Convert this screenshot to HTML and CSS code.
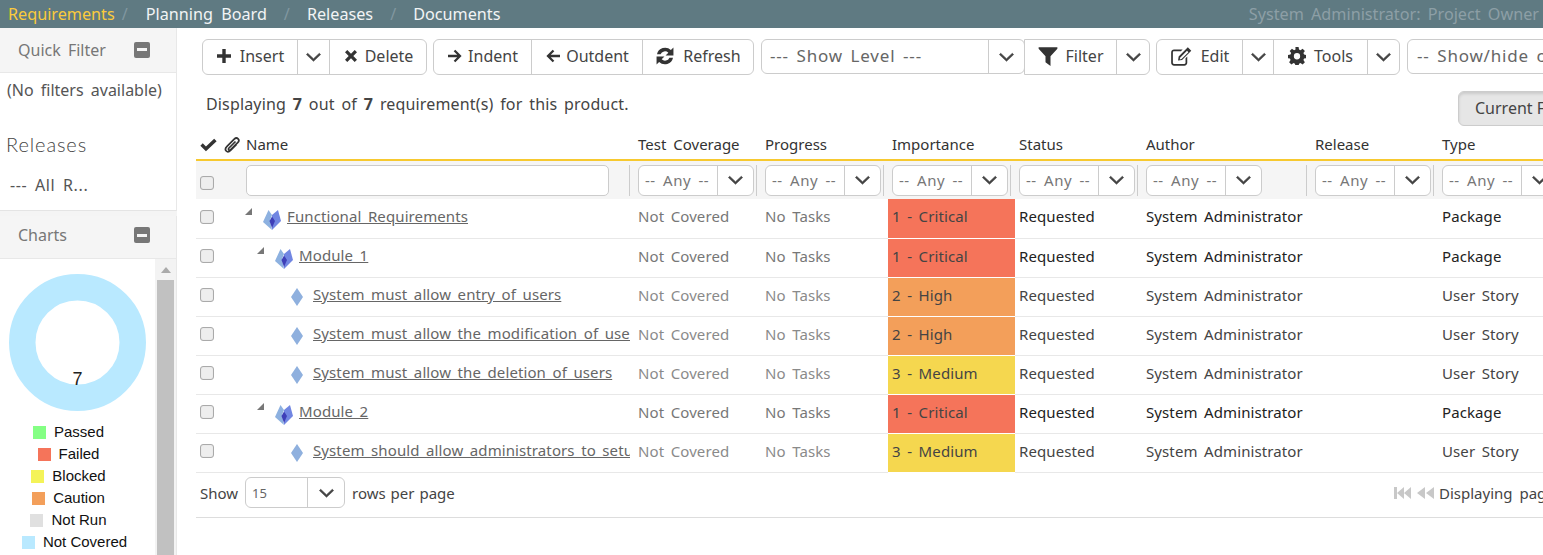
FILE: index.html
```html
<!DOCTYPE html>
<html lang="en">
<head>
  <meta charset="UTF-8" />
  <title>Requirements</title>
  <link rel="stylesheet" href="styles.css">
</head>
<body>
  <svg class="defs" width="0" height="0">
    <symbol id="i-plus" viewBox="0 0 16 16"><path d="M6.3 1h3.4v5.3H15v3.4H9.700V15H6.300V9.700H1V6.300h5.300z"/></symbol>
    <symbol id="i-times" viewBox="0 0 16 16"><path d="M2 4.300 4.300 2 8 5.700 11.700 2 14 4.300 10.300 8 14 11.700 11.700 14 8 10.300 4.300 14 2 11.700 5.700 8z"/></symbol>
    <symbol id="i-right" viewBox="0 0 16 16"><path d="M1 6.800h9.200L6.700 3.300 8.300 1.700 14.600 8l-6.300 6.300-1.600-1.600 3.500-3.500H1z"/></symbol>
    <symbol id="i-left" viewBox="0 0 16 16"><path d="M15 6.800H5.800l3.500-3.500-1.600-1.600L1.400 8l6.300 6.300 1.600-1.600-3.500-3.500H15z"/></symbol>
    <symbol id="i-refresh" viewBox="0 0 18 18"><path d="M1.800 7.500A7.400 7.400 0 0 1 14.300 3.700L16.600 1.400V8.500H9.500L12 6A4.300 4.300 0 0 0 5 7.500zM16.200 10.500A7.400 7.400 0 0 1 3.700 14.300L1.400 16.600V9.500H8.500L6 12A4.300 4.300 0 0 0 13 10.500z"/></symbol>
    <symbol id="i-filter" viewBox="0 0 16 16"><path d="M.5 1h15v1.200L10 8.200V16L6 13V8.200L.5 2.200z"/></symbol>
    <symbol id="i-edit" viewBox="0 0 20 18"><path d="M3.500 3H11L9.500 4.500h-6c-.6 0-1 .4-1 1v9c0 .6.4 1 1 1h9c.6 0 1-.4 1-1v-4l1.500-1.500v5.500c0 1.400-1.100 2.500-2.500 2.500h-9C2.100 17 1 15.900 1 14.500v-9C1 4.100 2.100 3 3.500 3zM15.500 1l3 3-8 8-3.500.5.500-3.500zM14.800 4l-6 6-.3 1.500 1.500-.3 6-6z"/></symbol>
    <symbol id="i-cog" viewBox="0 0 16 16"><path fill-rule="evenodd" d="M6.600 0h2.800l.4 2.200 1.300.6 1.900-1.300 2 2-1.300 1.900.6 1.300 2.200.4v2.800l-2.200.4-.6 1.300 1.300 1.900-2 2-1.900-1.300-1.300.6-.4 2.200H6.600l-.4-2.200-1.300-.6L3 15.500l-2-2 1.300-1.900-.6-1.300L0 9.900V7.100l2.200-.4.600-1.300L1.500 3.500l2-2 1.900 1.300 1.300-.6zM8 5.400a2.800 2.800 0 1 0 0 5.600 2.800 2.800 0 0 0 0-5.600z"/></symbol>
    <symbol id="i-chev" viewBox="0 0 16 10"><path d="M1.800 1 .4 2.400 8 9.600l7.600-7.200L14.200 1 8 6.800z" stroke="currentColor" stroke-width=".6"/></symbol>
    <symbol id="i-check" viewBox="0 0 18 14"><path d="M6.300 13.600.4 7.700 2.900 5.200l3.400 3.400L15 .4l2.600 2.500z"/></symbol>
    <symbol id="i-clip" viewBox="0 0 16 16"><path fill="none" stroke="currentColor" stroke-width="1.700" d="M11.500 4.500 5 11c-.8.800-.6 1.500-.2 1.900s1.100.6 1.900-.2l7-7c1.300-1.300 1.300-3 .4-3.900s-2.600-.9-3.900.4L3 9.400c-1.800 1.800-1.800 3.600-.8 4.600s2.800 1 4.600-.8l5.700-5.700"/></symbol>
    <symbol id="i-pkg" viewBox="0 0 18 20">
      <path fill="#8db1e0" d="M5.500 0 9 5 7 10 9 20 0 12z"/>
      <path fill="#7186e2" d="M15 0 9 5 9 20 18 11z"/>
      <path fill="#3e3fb8" d="M9 6.500 12 11 9 18 6.500 11z"/>
    </symbol>
    <symbol id="i-item" viewBox="0 0 12 18"><path fill="#8fb0de" d="M6 0 12 9 6 18 0 9z"/></symbol>
  </svg>

  <header class="topbar">
    <nav class="tabs">
      <a class="tab active">Requirements</a><span class="sep first">/</span>
      <a class="tab">Planning Board</a><span class="sep">/</span>
      <a class="tab">Releases</a><span class="sep">/</span>
      <a class="tab">Documents</a>
    </nav>
    <div class="user">System Administrator: Project Owner</div>
  </header>

  <div class="layout">
    <aside class="sidebar">
      <section class="panel">
        <div class="panel-head"><span>Quick Filter</span><span class="collapse"></span></div>
        <p class="no-filters">(No filters available)</p>
        <h3 class="releases">Releases</h3>
        <p class="all-rel">--- All R...</p>
      </section>
      <section class="panel charts">
        <div class="panel-head"><span>Charts</span><span class="collapse"></span></div>
        <div class="chart-body">
          <div class="chart">
            <svg class="donut" width="137" height="137" viewBox="0 0 137 137">
              <circle cx="68.500" cy="68.500" r="55.250" fill="none" stroke="#b9e9ff" stroke-width="26.500"/>
              <text x="68.500" y="111" text-anchor="middle">7</text>
            </svg>
            <ul class="legend">
              <li><i class="sw-pass"></i>Passed</li>
              <li><i class="sw-fail"></i>Failed</li>
              <li><i class="sw-block"></i>Blocked</li>
              <li><i class="sw-caution"></i>Caution</li>
              <li><i class="sw-none"></i>Not Run</li>
              <li><i class="sw-cover"></i>Not Covered</li>
            </ul>
          </div>
          <div class="scrollbar"><span class="up"></span><span class="thumb"></span></div>
        </div>
      </section>
    </aside>

    <main class="content">
      <div class="toolbar">
        <div class="group">
          <button class="w94"><svg class="ic"><use href="#i-plus"/></svg>Insert</button>
          <button class="caret w32"><svg class="chev"><use href="#i-chev"/></svg></button>
          <button class="w97 gap6"><svg class="ic"><use href="#i-times"/></svg>Delete</button>
        </div>
        <div class="group">
          <button class="w97 tight"><svg class="ic"><use href="#i-right"/></svg>Indent</button>
          <button class="w111 tight"><svg class="ic"><use href="#i-left"/></svg>Outdent</button>
          <button class="w111"><svg class="ic ic-lg"><use href="#i-refresh"/></svg>Refresh</button>
        </div>
        <div class="select show-level"><span>--- Show Level ---</span><b><svg class="chev"><use href="#i-chev"/></svg></b></div>
        <div class="group joined">
          <button class="w91"><svg class="ic ic-lg"><use href="#i-filter"/></svg>Filter</button>
          <button class="caret w33"><svg class="chev"><use href="#i-chev"/></svg></button>
        </div>
        <div class="group">
          <button class="w85"><svg class="ic ic-edit"><use href="#i-edit"/></svg>Edit</button>
          <button class="caret w31"><svg class="chev"><use href="#i-chev"/></svg></button>
          <button class="w94"><svg class="ic ic-cog"><use href="#i-cog"/></svg>Tools</button>
          <button class="caret w32"><svg class="chev"><use href="#i-chev"/></svg></button>
        </div>
        <div class="select show-hide"><span>-- Show/hide columns --</span></div>
      </div>

      <div class="info-row">
        <p class="info">Displaying <b>7</b> out of <b>7</b> requirement(s) for this product.</p>
        <button class="current">Current Filter</button>
      </div>

      <table class="grid">
        <colgroup>
          <col class="c-check"><col class="c-clip"><col class="c-name">
          <col class="c-std"><col class="c-std"><col class="c-std"><col class="c-std">
          <col class="c-author"><col class="c-std"><col class="c-std">
        </colgroup>
        <thead>
          <tr class="titles">
            <th class="mid"><svg class="th-check"><use href="#i-check"/></svg></th>
            <th class="mid clip-cell"><svg class="th-clip"><use href="#i-clip"/></svg></th>
            <th>Name</th>
            <th>Test Coverage</th><th>Progress</th><th>Importance</th><th>Status</th><th>Author</th><th>Release</th><th>Type</th>
          </tr>
          <tr class="filters">
            <td class="mid"><span class="cb"></span></td>
            <td></td>
            <td><div class="f-cell"><span class="name-input"></span></div></td>
            <td><div class="f-cell"><div class="select any"><span>-- Any --</span><b><svg class="chev"><use href="#i-chev"/></svg></b></div></div></td>
            <td><div class="f-cell"><div class="select any"><span>-- Any --</span><b><svg class="chev"><use href="#i-chev"/></svg></b></div></div></td>
            <td><div class="f-cell"><div class="select any"><span>-- Any --</span><b><svg class="chev"><use href="#i-chev"/></svg></b></div></div></td>
            <td><div class="f-cell"><div class="select any"><span>-- Any --</span><b><svg class="chev"><use href="#i-chev"/></svg></b></div></div></td>
            <td><div class="f-cell"><div class="select any"><span>-- Any --</span><b><svg class="chev"><use href="#i-chev"/></svg></b></div></div></td>
            <td><div class="f-cell"><div class="select any"><span>-- Any --</span><b><svg class="chev"><use href="#i-chev"/></svg></b></div></div></td>
            <td><div class="f-cell"><div class="select any"><span>-- Any --</span><b><svg class="chev"><use href="#i-chev"/></svg></b></div></div></td>
          </tr>
        </thead>
        <tbody>
          <tr class="pkg">
            <td class="mid"><span class="cb"></span></td><td></td>
            <td class="tree"><div class="node lvl0"><span class="tri"></span><svg class="pkg-ic"><use href="#i-pkg"/></svg><a>Functional Requirements</a></div></td>
            <td class="muted">Not Covered</td><td class="muted">No Tasks</td><td class="imp crit">1 - Critical</td><td>Requested</td><td>System Administrator</td><td></td><td>Package</td>
          </tr>
          <tr class="pkg">
            <td class="mid"><span class="cb"></span></td><td></td>
            <td class="tree"><div class="node lvl1"><span class="tri"></span><svg class="pkg-ic"><use href="#i-pkg"/></svg><a>Module 1</a></div></td>
            <td class="muted">Not Covered</td><td class="muted">No Tasks</td><td class="imp crit">1 - Critical</td><td>Requested</td><td>System Administrator</td><td></td><td>Package</td>
          </tr>
          <tr>
            <td class="mid"><span class="cb"></span></td><td></td>
            <td class="tree"><div class="node lvl2"><svg class="item-ic"><use href="#i-item"/></svg><a>System must allow entry of users</a></div></td>
            <td class="muted">Not Covered</td><td class="muted">No Tasks</td><td class="imp high">2 - High</td><td>Requested</td><td>System Administrator</td><td></td><td>User Story</td>
          </tr>
          <tr>
            <td class="mid"><span class="cb"></span></td><td></td>
            <td class="tree"><div class="node lvl2"><svg class="item-ic"><use href="#i-item"/></svg><a>System must allow the modification of users</a></div></td>
            <td class="muted">Not Covered</td><td class="muted">No Tasks</td><td class="imp high">2 - High</td><td>Requested</td><td>System Administrator</td><td></td><td>User Story</td>
          </tr>
          <tr>
            <td class="mid"><span class="cb"></span></td><td></td>
            <td class="tree"><div class="node lvl2"><svg class="item-ic"><use href="#i-item"/></svg><a>System must allow the deletion of users</a></div></td>
            <td class="muted">Not Covered</td><td class="muted">No Tasks</td><td class="imp med">3 - Medium</td><td>Requested</td><td>System Administrator</td><td></td><td>User Story</td>
          </tr>
          <tr class="pkg">
            <td class="mid"><span class="cb"></span></td><td></td>
            <td class="tree"><div class="node lvl1"><span class="tri"></span><svg class="pkg-ic"><use href="#i-pkg"/></svg><a>Module 2</a></div></td>
            <td class="muted">Not Covered</td><td class="muted">No Tasks</td><td class="imp crit">1 - Critical</td><td>Requested</td><td>System Administrator</td><td></td><td>Package</td>
          </tr>
          <tr>
            <td class="mid"><span class="cb"></span></td><td></td>
            <td class="tree"><div class="node lvl2"><svg class="item-ic"><use href="#i-item"/></svg><a>System should allow administrators to setup</a></div></td>
            <td class="muted">Not Covered</td><td class="muted">No Tasks</td><td class="imp med">3 - Medium</td><td>Requested</td><td>System Administrator</td><td></td><td>User Story</td>
          </tr>
        </tbody>
      </table>

      <div class="pager">
        <div class="rows">
          <span>Show</span>
          <div class="select per-page"><span>15</span><b><svg class="chev"><use href="#i-chev"/></svg></b></div>
          <span>rows per page</span>
        </div>
        <div class="paging">
          <svg class="pg-ic" viewBox="0 0 18 12" width="18" height="12"><path d="M0 0h3v12H0zM3 6l7-6v12zM10 6l7-6v12z"/></svg>
          <svg class="pg-ic" viewBox="0 0 17 12" width="17" height="12"><path d="M0 6l8-6v12zM9 6l8-6v12z"/></svg>
          <span>Displaying page 1 of 1</span>
        </div>
      </div>
    </main>
  </div>
</body>
</html>
```

FILE: styles.css
```css
html, body { margin: 0; padding: 0; height: 555px; overflow: hidden; background: #fff; }
body { width: 1543px; font-family: "Noto Sans", sans-serif; font-size: 15px; word-spacing: 3px; color: #333; }
.defs { display: block; height: 0; }
p, h3, ul { margin: 0; padding: 0; }
svg { fill: currentColor; }

/* top bar */
.topbar { height: 28px; background: #5f7a82; display: flex; justify-content: space-between; align-items: center; font-size: 16.2px; white-space: nowrap; }
.tabs { padding-left: 8px; display: flex; align-items: center; word-spacing: 4px; }
.tab { color: #f2f4f5; }
.tab.active { color: #fbcb3c; }
.sep { color: #8197a0; margin: 0 17px; }
.sep.first { margin: 0 18px 0 7px; }
.user { color: #8d9fa6; padding-right: 4px; }

.layout { display: flex; height: 527px; }

/* sidebar */
.sidebar { width: 177px; flex: none; background: #f4f4f4; }
.panel { background: #fff; border-right: 1px solid #e8e8e8; border-bottom: 1px solid #e4e4e4; }
.panel-head { height: 43px; background: #f5f5f5; border-bottom: 1px solid #e8e8e8; display: flex; justify-content: space-between; align-items: center; padding: 0 26px 1px 18px; color: #777; font-size: 16px; }
.collapse { width: 16px; height: 16px; background: #777; border-radius: 2px; display: flex; align-items: center; justify-content: center; }
.collapse::after { content: ""; width: 10px; height: 3px; background: #f5f5f5; }
.no-filters { padding: 6px 0 0 7px; line-height: 22px; font-size: 16px; color: #555; white-space: nowrap; }
.releases { font-family: "Lato", sans-serif; font-weight: 300; font-size: 20px; letter-spacing: .9px; color: #444; padding: 30px 0 0 6px; line-height: 26px; }
.all-rel { padding: 17px 0 14px 10px; line-height: 22px; font-size: 16px; letter-spacing: .6px; color: #555; white-space: nowrap; }
.charts { margin-top: 5px; border-bottom: 0; }
.charts .panel-head { height: 38px; padding-bottom: 4px; }
.chart-body { display: flex; height: 296px; overflow: hidden; }
.chart { width: 155px; flex: none; display: flex; flex-direction: column; align-items: center; }
.donut { margin-top: 15px; flex: none; }
.donut text { font-family: "Liberation Sans", sans-serif; font-size: 18px; word-spacing: 0; fill: #222; }
.legend { list-style: none; margin-top: 10px; padding-right: 6px; font-family: "Liberation Sans", sans-serif; font-size: 15px; word-spacing: 0; color: #111; text-align: center; }
.legend li { height: 22px; line-height: 22px; display: flex; justify-content: center; align-items: center; gap: 8px; padding-right: 12px; }
.legend li:last-child { padding-right: 0; }
.legend i { width: 13px; height: 13px; flex: none; }
.sw-pass { background: #84ff84; }
.sw-fail { background: #f5745a; }
.sw-block { background: #f4f358; }
.sw-caution { background: #f39f5a; }
.sw-none { background: #e0e0e0; }
.sw-cover { background: #b9e9ff; }
.scrollbar { width: 21px; background: #f3f3f3; display: flex; flex-direction: column; align-items: center; }
.scrollbar .up { width: 0; height: 0; border: 5px solid transparent; border-top: 0; border-bottom: 6px solid #aaa; margin: 8px 0 7px; }
.scrollbar .thumb { width: 17px; flex: 1; background: #c1c1c1; }

/* main */
.content { flex: 1; min-width: 0; overflow: hidden; padding-left: 19px; }
.toolbar { display: flex; gap: 6px; margin: 11px 0 0 6px; height: 36px; width: 1400px; }
.group { display: flex; flex: none; height: 36px; border: 1px solid #ccc; border-radius: 6px; box-sizing: border-box; background: #fff; }
.group.joined { margin-left: -7px; border-top-left-radius: 0; border-bottom-left-radius: 0; }
.group button { height: 34px; border: 0; border-left: 1px solid #ccc; background: transparent; padding: 0 0 2px; font: inherit; font-size: 16px; word-spacing: 0; color: #444; display: flex; align-items: center; justify-content: center; gap: 8px; box-sizing: border-box; }
.group button:first-child { border-left: 0; }
.group button.tight { gap: 5px; }
.group button.gap6 { gap: 6px; }
.group button.caret { padding: 0; }
.w31 { width: 31px; } .w32 { width: 32px; } .w33 { width: 33px; }
.w85 { width: 85px; } .w91 { width: 91px; } .w94 { width: 94px; }
.w97 { width: 97px; } .w111 { width: 111px; }
.ic { width: 16px; height: 16px; color: #333; flex: none; }
.ic-lg { width: 20px; height: 20px; }
.ic-cog { width: 18px; height: 18px; }
.ic-edit { width: 23px; height: 21px; }
.chev { width: 15px; height: 10px; color: #444; display: block; }

.select { display: flex; align-items: center; box-sizing: border-box; border: 1px solid #ccc; border-radius: 6px; background: #fff; color: #666; white-space: nowrap; overflow: hidden; }
.select > span { flex: 1; min-width: 0; }
.select b { flex: none; height: 100%; border-left: 1px solid #ccc; display: flex; align-items: center; justify-content: center; }
.show-level { width: 264px; height: 35px; margin-left: 1px; font-size: 17px; word-spacing: 2.5px; letter-spacing: .8px; flex: none; }
.show-level > span { padding: 0 0 2px 8px; }
.show-level b { width: 35px; }
.show-hide { width: 200px; height: 35px; margin-left: 1px; font-size: 17px; word-spacing: 2.5px; letter-spacing: .8px; flex: none; }
.show-hide > span { padding: 0 0 2px 9px; }

.info-row { display: flex; justify-content: space-between; height: 55px; width: 1400px; }
.info { padding: 18px 0 0 10px; line-height: 22px; font-size: 16px; word-spacing: 2.5px; letter-spacing: .15px; color: #444; }
.current { margin: 16px 0 0 0; width: 200px; flex: none; position: relative; left: 62px; height: 35px; text-align: left; padding: 0 16px 2px; font: inherit; font-size: 16px; background: #e6e6e6; border: 1px solid #ccc; border-radius: 6px; color: #444; box-shadow: inset 0 2px 3px rgba(0,0,0,.12); }

/* table */
.grid { table-layout: fixed; border-collapse: collapse; width: 1369px; }
.c-check { width: 26px; } .c-clip { width: 20px; } .c-name { width: 392px; }
.c-std { width: 127px; } .c-author { width: 169px; }
.grid th, .grid td { padding: 0 4px; text-align: left; font-weight: 400; white-space: nowrap; overflow: hidden; }
.grid .mid { padding: 0 0 0 4px; }
.grid .clip-cell { padding: 0 0 0 2px; }
.titles th { height: 27px; color: #333; font-size: 15px; border-bottom: 2px solid #f7c92f; padding-bottom: 2px; }
.filters td { height: 38px; background: #f5f5f5; }
.grid tbody tr { height: 39px; }
.grid tbody td { border-bottom: 1px solid #e8e8e8; height: 38px; box-sizing: border-box; padding-bottom: 4px; word-spacing: 2.5px; letter-spacing: .1px; color: #444; }
.grid tbody .pkg td { color: #222; }
.grid tbody td.muted { color: #8a8a8a; }
.grid tbody .pkg td.muted { color: #777; }
.grid tbody td.imp { border-bottom: 1px solid #fff; color: #444; }
.crit { background: #f5745a; }
.high { background: #f39f5a; }
.med { background: #f5d74f; }
.th-check { width: 17px; height: 14px; color: #333; display: block; }
.th-clip { width: 16px; height: 16px; color: #333; display: block; }
.cb { display: block; width: 12px; height: 12px; border: 1px solid #aaa; border-radius: 3px; background: #eee; box-shadow: inset 0 0 1px #ccc; }
.grid tbody .cb { margin-bottom: 3px; }
.filters .cb { margin-top: 6px; }
.f-cell { display: flex; height: 31px; align-items: center; border-right: 1px solid #ccc; }
.name-input { display: block; width: 361px; height: 29px; background: #fff; border: 1px solid #ccc; border-radius: 5px; }
.any { width: 116px; height: 31px; font-size: 15px; letter-spacing: .5px; }
.any > span { padding-left: 6px; color: #777; }
.any b { width: 35px; }

.node { display: flex; align-items: center; overflow: hidden; }
.node a { color: #666; text-decoration: underline; white-space: nowrap; margin-bottom: 5px; }
.grid tbody td.tree { padding: 0 4px 0 0; }
.lvl0 { padding-left: 3px; }
.lvl1 { padding-left: 15px; }
.lvl2 { padding-left: 49px; }
.tri { width: 0; height: 0; border-style: solid; border-width: 0 0 7px 7px; border-color: transparent transparent #777 transparent; margin: 0 11px 14px 0; flex: none; }
.pkg-ic { width: 18px; height: 20px; margin: 3px 6px 0 0; flex: none; }
.item-ic { width: 12px; height: 18px; margin-right: 10px; flex: none; }

/* footer */
.pager { display: flex; justify-content: space-between; width: 1347px; height: 45px; border-bottom: 1px solid #ddd; box-sizing: border-box; align-items: center; white-space: nowrap; color: #444; padding: 0 0 4px 4px; }
.rows { display: flex; align-items: center; gap: 7px; word-spacing: 1px; }
.per-page { width: 100px; height: 31px; font-size: 13px; }
.per-page > span { padding-left: 6px; }
.per-page b { width: 36px; }
.paging { display: flex; align-items: center; gap: 5px; width: 149px; overflow: hidden; flex: none; }
.pg-ic { color: #c8c8c8; flex: none; }
```
